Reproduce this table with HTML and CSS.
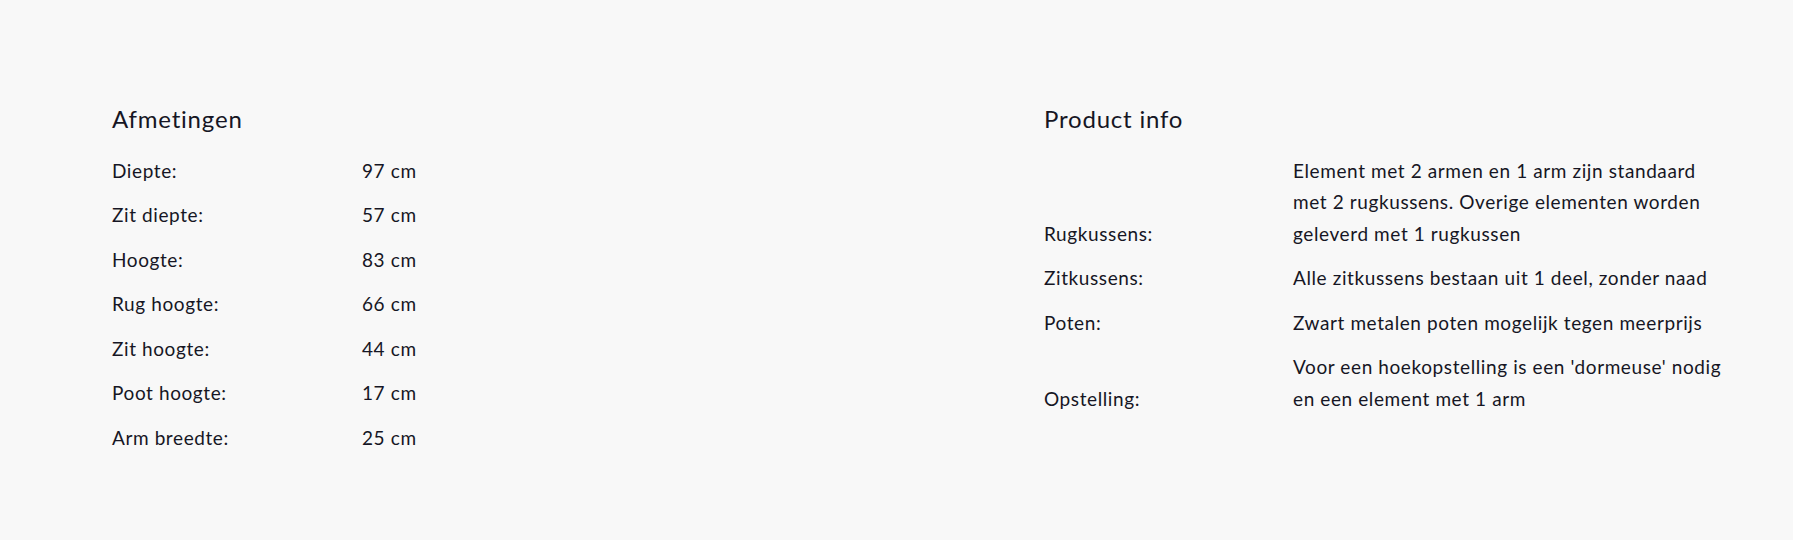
FILE: index.html
```html
<!DOCTYPE html>
<html lang="nl">
<head>
<meta charset="utf-8">
<title>Afmetingen en product info</title>
<link rel="stylesheet" href="styles.css">
</head>
<body>
<main class="specs">
  <section class="spec-block spec-block--dims">
    <h2 class="spec-title">Afmetingen</h2>
    <dl class="spec-list">
      <div class="spec-row"><dt>Diepte:</dt><dd>97 cm</dd></div>
      <div class="spec-row"><dt>Zit diepte:</dt><dd>57 cm</dd></div>
      <div class="spec-row"><dt>Hoogte:</dt><dd>83 cm</dd></div>
      <div class="spec-row"><dt>Rug hoogte:</dt><dd>66 cm</dd></div>
      <div class="spec-row"><dt>Zit hoogte:</dt><dd>44 cm</dd></div>
      <div class="spec-row"><dt>Poot hoogte:</dt><dd>17 cm</dd></div>
      <div class="spec-row"><dt>Arm breedte:</dt><dd>25 cm</dd></div>
    </dl>
  </section>
  <section class="spec-block spec-block--info">
    <h2 class="spec-title">Product info</h2>
    <dl class="spec-list">
      <div class="spec-row"><dt>Rugkussens:</dt><dd>Element met 2 armen en 1 arm zijn standaard<br>met 2 rugkussens. Overige elementen worden<br>geleverd met 1 rugkussen</dd></div>
      <div class="spec-row"><dt>Zitkussens:</dt><dd>Alle zitkussens bestaan uit 1 deel, zonder naad</dd></div>
      <div class="spec-row"><dt>Poten:</dt><dd>Zwart metalen poten mogelijk tegen meerprijs</dd></div>
      <div class="spec-row"><dt>Opstelling:</dt><dd>Voor een hoekopstelling is een 'dormeuse' nodig<br>en een element met 1 arm</dd></div>
    </dl>
  </section>
</main>
</body>
</html>
```

FILE: styles.css
```css
html, body {
  margin: 0;
  padding: 0;
  background: #f8f8f8;
}

body {
  font-family: Lato, "Open Sans", sans-serif;
  color: #161624;
  width: 1793px;
  height: 540px;
}

.specs {
  display: grid;
  grid-template-columns: 932px 1fr;
  padding: 104px 0 0 112px;
}

.spec-title {
  margin: 0 0 14px;
  font-size: 24px;
  line-height: 30px;
  font-weight: 400;
  letter-spacing: 0.8px;
}

.spec-list {
  margin: 0;
}

.spec-row {
  display: grid;
  grid-template-columns: 250px 1fr;
  align-items: end;
  padding: 6.5px 0;
  font-size: 19px;
  line-height: 31.5px;
  letter-spacing: 0.6px;
}

.spec-block--info .spec-row {
  grid-template-columns: 249px 470px;
}

.spec-row dt,
.spec-row dd {
  margin: 0;
}
```
